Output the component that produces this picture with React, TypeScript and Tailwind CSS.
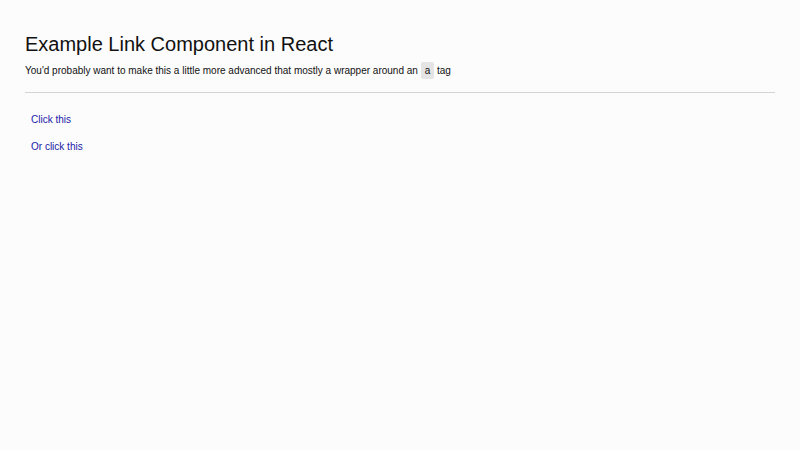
const links = [
  { label: 'Click this', href: '#one' },
  { label: 'Or click this', href: '#two' },
];

function Link({ href, children }: { href: string; children: React.ReactNode }) {
  return (
    <a href={href} className="block px-1.5 py-1 text-[10px] leading-4 text-[#2020a8] no-underline">
      {children}
    </a>
  );
}

export default function App() {
  return (
    <div className="min-h-[450px] bg-[#fcfcfc] px-[25px] pt-[32px] font-['Liberation_Sans',Arial,sans-serif] text-[#111]">
      <h1 className="text-[20px] leading-6">Example Link Component in React</h1>
      <p className="mt-[7px] text-[10px] leading-4">
        You'd probably want to make this a little more advanced that mostly a wrapper around an{' '}
        <code className="rounded-[2px] bg-[#e4e4e4] px-[4px] py-[3px] font-['Liberation_Sans',Arial,sans-serif]">a</code> tag
      </p>
      <hr className="mt-[13px] border-[#d4d4d4]" />
      <nav className="mt-[15px] flex flex-col gap-[3px]">
        {links.map((l) => (
          <Link key={l.href} href={l.href}>
            {l.label}
          </Link>
        ))}
      </nav>
    </div>
  );
}
